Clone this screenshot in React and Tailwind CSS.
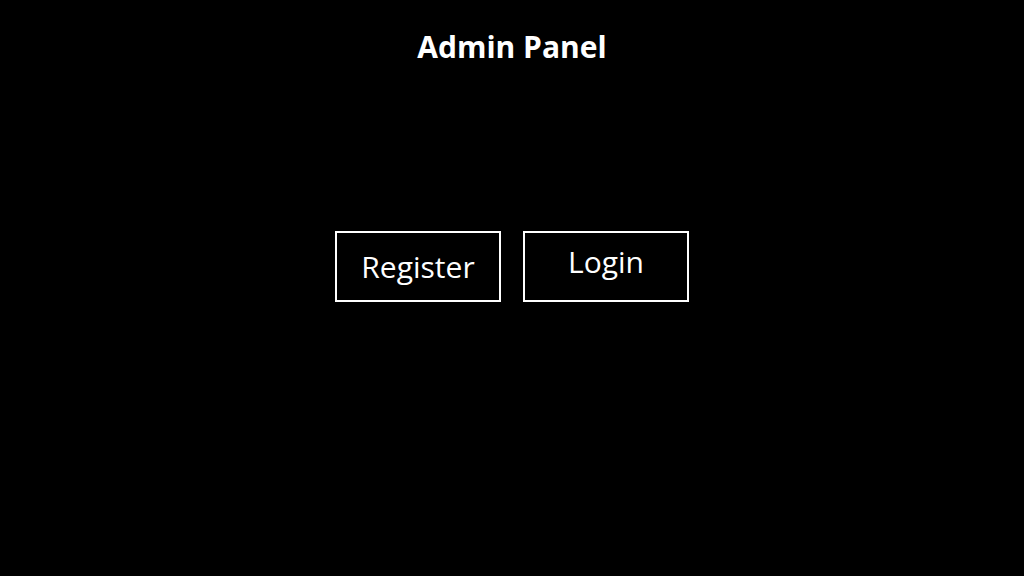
export default function App() {
  return (
    <div className="w-[1024px] h-[576px] bg-black text-white flex flex-col items-center" style={{ fontFamily: '"Open Sans", "Noto Sans", sans-serif' }}>
      <h1 className="mt-[25px] text-[30px] leading-[44px] font-bold">Admin Panel</h1>
      <div className="mt-[162px] flex gap-[22px]">
        <button className="w-[166px] h-[71px] border-2 border-white text-[30px] leading-none flex items-center justify-center pt-[1px]">Register</button>
        <button className="w-[166px] h-[71px] border-2 border-white text-[30px] leading-none flex items-center justify-center pb-[9px]">Login</button>
      </div>
    </div>
  );
}
